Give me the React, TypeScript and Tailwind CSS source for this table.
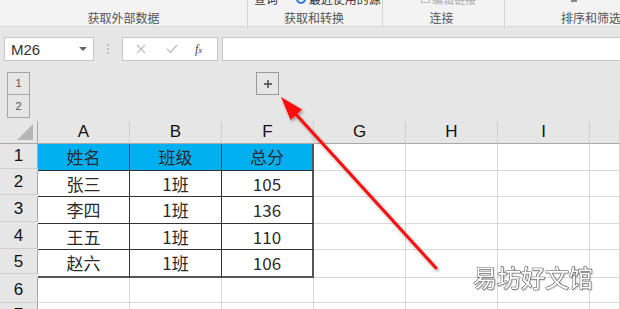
import React from "react";

const cols = ["A", "B", "F", "G", "H", "I", ""];
const rowHeights = ["h-[25px]", "h-[24px]", "h-[25px]", "h-[25px]", "h-[24px]", "h-[25px]", "h-[25px]"];
const data: string[][] = [
  ["姓名", "班级", "总分"],
  ["张三", "1班", "105"],
  ["李四", "1班", "136"],
  ["王五", "1班", "110"],
  ["赵六", "1班", "106"],
];

function Cell({ r, c }: { r: number; c: number }) {
  const inTable = r < 5 && c < 3;
  const text = inTable ? data[r][c] : "";
  let cls = "flex items-center justify-center text-[17px] text-[#2b2b2b] ";
  if (inTable) {
    cls += r === 0 ? "bg-[#00b0f0] " : "bg-white ";
    cls += c === 2 ? "border-r-2 border-r-[#555] " : "border-r border-r-[#333] ";
    cls += r === 4 ? "border-b-2 border-b-[#555] " : "border-b border-b-[#333] ";
  } else {
    cls += "bg-white border-r border-b border-[#d9d9d9] ";
  }
  return <div className={cls}>{text}</div>;
}

export default function App() {
  return (
    <div className="relative w-[620px] h-[309px] overflow-hidden bg-[#e6e6e6] font-['Noto_Sans_CJK_SC','Noto_Sans',sans-serif]">
      {/* Ribbon */}
      <div className="h-[27px] bg-[#f3f3f3] border-b border-[#dadada] flex text-[12px] text-[#555]">
        <div className="w-[248px] flex flex-col items-center justify-end border-r border-[#d6d6d6]">
          <span className="leading-[14px] mb-[1px]">获取外部数据</span>
        </div>
        <div className="w-[135px] relative flex flex-col items-center justify-end border-r border-[#d6d6d6]">
          <div className="absolute left-[6px] top-[-8px] flex items-center gap-[3px] text-[#333] leading-[14px]">
            <span>查询 ·</span>
            <span className="inline-block w-[10px] h-[10px] rounded-full border-2 border-[#2b79d0]"></span>
            <span>最近使用的源</span>
          </div>
          <span className="leading-[14px] mb-[1px] ml-[-2px]">获取和转换</span>
        </div>
        <div className="w-[122px] relative flex flex-col items-center justify-end border-r border-[#d6d6d6]">
          <div className="absolute left-[38px] top-[-8px] flex items-center gap-[2px] text-[#aaa] leading-[14px] text-[11px]">
            <span className="inline-block w-[9px] h-[8px] border border-[#bbb]"></span>
            <span>编辑链接</span>
          </div>
          <span className="leading-[14px] mb-[1px] mr-[4px]">连接</span>
        </div>
        <div className="flex-1 relative flex flex-col items-end justify-end pr-[1px]">
          <div className="absolute left-[66px] top-[-2px] w-[6px] h-[4px] bg-[#888]"></div>
          <span className="leading-[14px] mb-[1px] mr-[-2px]">排序和筛选</span>
        </div>
      </div>

      {/* Formula bar */}
      <div className="flex items-center h-[24px] mt-[10px] pl-[4px]">
        <div className="w-[90px] h-[24px] bg-white border border-[#c6c6c6] flex items-center justify-between pl-[6px] pr-[6px]">
          <span className="text-[15px] text-[#333] font-['Liberation_Sans',sans-serif] leading-none">M26</span>
          <svg width="8" height="5" viewBox="0 0 8 5"><path d="M0 0 L8 0 L4 4 Z" fill="#666" /></svg>
        </div>
        <div className="w-[28px] flex flex-col items-center gap-[2px]">
          <span className="w-[2px] h-[2px] bg-[#bbb]"></span>
          <span className="w-[2px] h-[2px] bg-[#bbb]"></span>
          <span className="w-[2px] h-[2px] bg-[#bbb]"></span>
        </div>
        <div className="w-[96px] h-[24px] bg-white border border-[#c6c6c6] flex items-center">
          <svg className="ml-[13px]" width="10" height="10" viewBox="0 0 10 10"><path d="M1 1 L9 9 M9 1 L1 9" stroke="#bdbdbd" strokeWidth="1.2" /></svg>
          <svg className="ml-[20px]" width="12" height="10" viewBox="0 0 12 10"><path d="M1 5 L4.5 8.5 L11 1" stroke="#bdbdbd" strokeWidth="1.3" fill="none" /></svg>
          <span className="ml-[17px] text-[12px] italic font-['Liberation_Serif',serif] text-[#444] leading-none">f<span className="text-[9px]">x</span></span>
        </div>
        <div className="ml-[4px] flex-1 h-[24px] bg-white border border-[#c6c6c6] border-r-0"></div>
      </div>

      {/* Outline area */}
      <div className="h-[60px] pt-[11px] relative">
        <div className="ml-[7px] w-[23px] flex flex-col">
          <div className="h-[23px] border border-[#a6a6a6] flex items-center justify-center text-[11px] text-[#555] font-['Liberation_Sans',sans-serif]">1</div>
          <div className="h-[23px] border border-[#a6a6a6] border-t-0 flex items-center justify-center text-[11px] text-[#555] font-['Liberation_Sans',sans-serif]">2</div>
        </div>
        <div className="absolute left-[256px] top-[11px] w-[23px] h-[23px] border border-[#9a9a9a] flex items-center justify-center">
          <svg width="8" height="8" viewBox="0 0 8 8"><path d="M4 0 V8 M0 4 H8" stroke="#444" strokeWidth="1.4" /></svg>
        </div>
      </div>

      {/* Grid */}
      <div className="grid grid-cols-[38px_92px_92px_92px_92px_92px_92px_30px]">
        <div className="h-[23px] bg-[#e6e6e6] border-b border-r border-[#a8a8a8] flex items-end justify-end pr-[4px] pb-[3px]">
          <svg width="16" height="16" viewBox="0 0 16 16"><path d="M16 0 L16 16 L0 16 Z" fill="#b5b5b5" /></svg>
        </div>
        {cols.map((c, i) => (
          <div key={i} className="h-[23px] bg-[#e6e6e6] border-b border-[#a8a8a8] border-r border-r-[#cfcfcf] flex items-center justify-center text-[17px] text-[#111] font-['Liberation_Sans',sans-serif]">
            {c}
          </div>
        ))}
        {rowHeights.map((h, r) => (
          <React.Fragment key={r}>
            <div className={`${h} bg-[#e6e6e6] border-r border-[#a8a8a8] border-b border-b-[#cfcfcf] flex items-center justify-center text-[17px] text-[#111] font-['Liberation_Sans',sans-serif]`}>
              {r + 1}
            </div>
            {cols.map((_, c) => (
              <Cell key={c} r={r} c={c} />
            ))}
          </React.Fragment>
        ))}
      </div>

      {/* Red arrow overlay */}
      <svg className="absolute left-0 top-0 pointer-events-none" width="620" height="309" viewBox="0 0 620 309">
        <defs>
          <filter id="sh" x="-20%" y="-20%" width="140%" height="140%">
            <feDropShadow dx="1.5" dy="2" stdDeviation="1.5" floodColor="#000" floodOpacity="0.35" />
          </filter>
          <filter id="wsh" x="-10%" y="-10%" width="120%" height="130%">
            <feDropShadow dx="0.8" dy="0.8" stdDeviation="0.6" floodColor="#000" floodOpacity="0.25" />
          </filter>
        </defs>
        <g filter="url(#sh)">
          <line x1="436" y1="268" x2="292" y2="110" stroke="#ff0d0d" strokeWidth="3" strokeLinecap="round" />
          <path d="M281 97 L290.5 120 L302 109.5 Z" fill="#ff0d0d" />
        </g>
        <text
          x="473"
          y="287"
          fontSize="24"
          fontFamily="'Noto Sans CJK SC', sans-serif"
          fill="#ffffff"
          stroke="#505050"
          strokeWidth="1.1"
          strokeLinejoin="round"
          paintOrder="stroke"
          filter="url(#wsh)"
        >
          易坊好文馆
        </text>
      </svg>
    </div>
  );
}
